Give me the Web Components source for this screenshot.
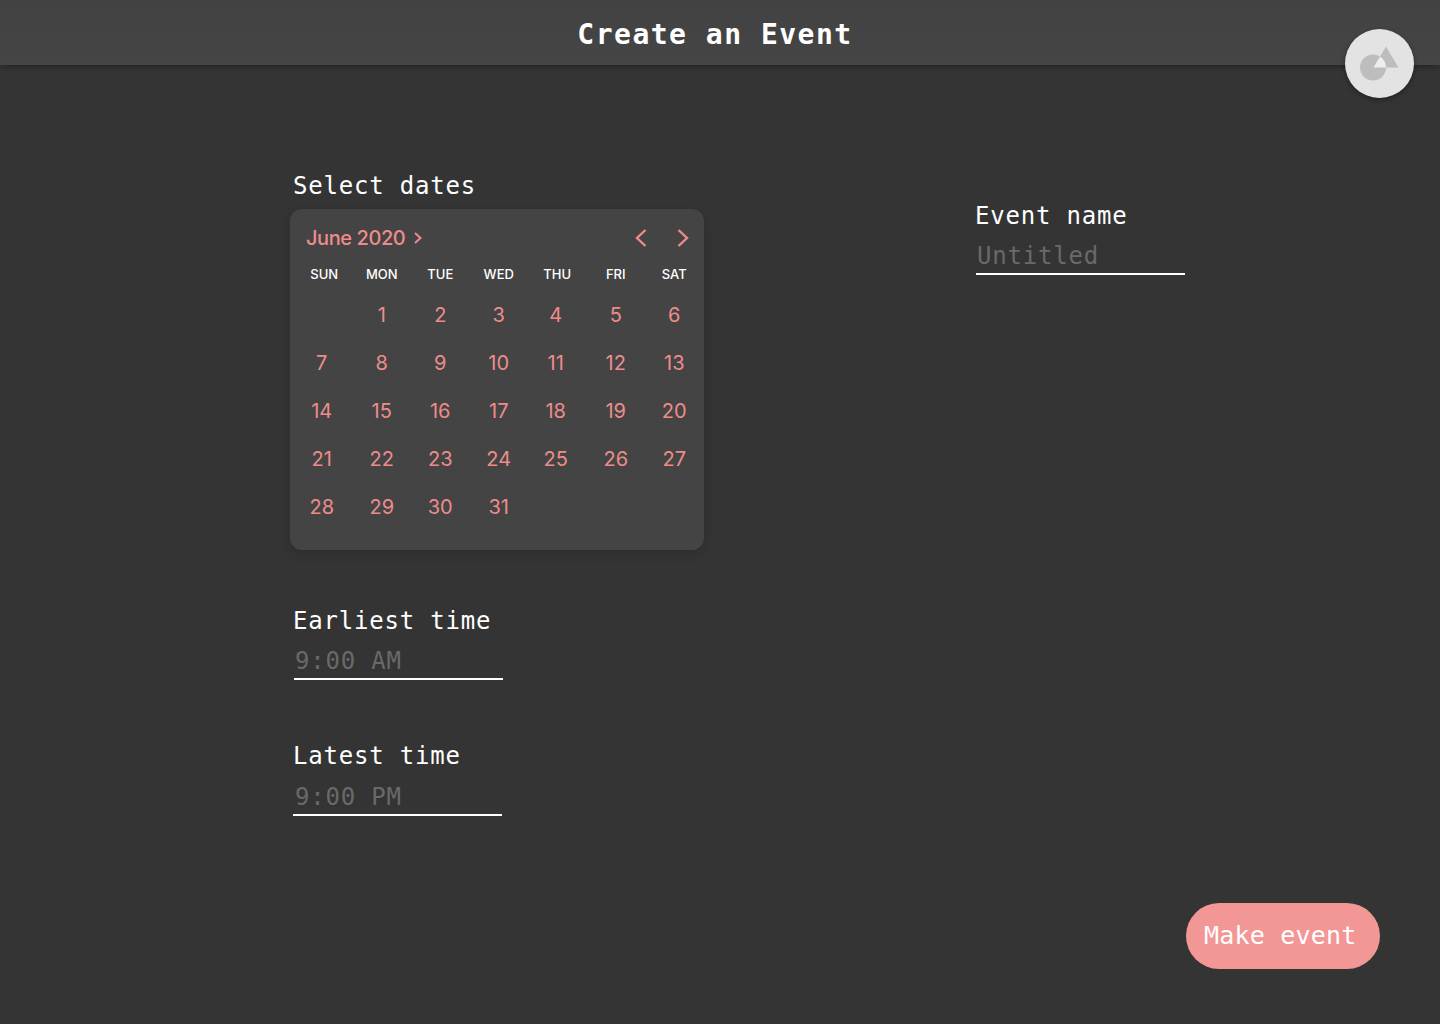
<!DOCTYPE html>
<html><head><meta charset="utf-8">
<style>
html,body{margin:0;padding:0;background:#343434;height:100%}
body{font-family:"DejaVu Sans Mono",monospace;color:#fff}
</style></head>
<body>
<app-header title="Create an Event"></app-header>
<event-page></event-page>
<template id="t-header">
<style>
:host{display:block;position:relative;height:65px;background:linear-gradient(#424242,#454545);box-shadow:0 2px 5px rgba(0,0,0,.28);z-index:2}
.bar{height:100%;display:flex;align-items:center;justify-content:center;padding-top:3px;box-sizing:border-box}
h1{margin:0 10px 0 0;font:700 28px "DejaVu Sans Mono",monospace;letter-spacing:1.5px;color:#fff}
.logo{position:absolute;left:1345px;top:29px;width:69px;height:69px;border-radius:50%;background:#e3e3e3;box-shadow:0 2px 5px rgba(0,0,0,.35);display:flex}
</style>
<div class="bar"><h1></h1></div>
<div class="logo"><svg width="69" height="69" viewBox="0 0 69 69">
<defs><clipPath id="c"><circle cx="28" cy="38.500" r="13"/></clipPath></defs>
<circle cx="28" cy="38.500" r="13" fill="#bdbdbd"/>
<path d="M41 17.500 53.500 38.500H28.500Z" fill="#bdbdbd"/>
<path d="M41 17.500 53.500 38.500H28.500Z" fill="#eeeeee" clip-path="url(#c)"/>
</svg></div>
</template>

<template id="t-field">
<style>
:host{display:block;width:209px}
label{display:block;margin-left:var(--lx,-1px);font-size:24px;line-height:30px;letter-spacing:.8px;color:#fff;white-space:nowrap}
.v{font-size:24px;line-height:30px;letter-spacing:.8px;color:#696969;padding:var(--vt,10px) 0 0 var(--vx,1px);height:32px;border-bottom:2px solid #fff;white-space:nowrap}
</style>
<label><slot name="label"></slot></label>
<div class="v"><slot></slot></div>
</template>

<template id="t-cal">
<style>
:host{display:block;width:414px;height:341px;box-sizing:border-box;background:#444;border-radius:12px;box-shadow:0 4px 12px rgba(0,0,0,.12);padding:16px 0 0 4px;font-family:Inter,sans-serif}
.head{display:flex;align-items:center;height:26px;padding-left:12px;color:#ee8c8c}
.m{font-size:20px;font-weight:500;letter-spacing:-.42px;color:#ee8c8c}
.head svg{display:block}
.sp{flex:1}
.nav{display:flex;gap:24px;align-items:center;margin-right:12px}
.grid{display:grid;grid-template-columns:repeat(7,58.500px);margin-top:13px}
.w{height:20px;display:flex;align-items:center;justify-content:center;font-size:13px;font-weight:500;color:#fff;margin-bottom:7px}
.w.s{padding-left:2px}
.d{height:48px;box-sizing:border-box;display:flex;align-items:center;justify-content:center;font-size:20px;color:#ee8c8c}
.d.n{padding-right:3px}
</style>
<div class="head"><span class="m">June 2020</span>
<svg width="10" height="14" viewBox="0 0 10 14" style="margin-left:8px"><path d="M2 2l5.500 5L2 12" fill="none" stroke="#ee8c8c" stroke-width="2"/></svg>
<span class="sp"></span>
<div class="nav">
<svg width="18" height="20" viewBox="0 0 18 20"><path d="M13.500 2 5 10l8.500 8" fill="none" stroke="#ee8c8c" stroke-width="2.400"/></svg>
<svg width="18" height="20" viewBox="0 0 18 20"><path d="M4.500 2 13 10l-8.500 8" fill="none" stroke="#ee8c8c" stroke-width="2.400"/></svg>
</div></div>
<div class="grid" id="g"></div>
</template>

<template id="t-btn">
<style>
:host{display:inline-flex;align-items:center;justify-content:flex-start;width:194px;height:66px;box-sizing:border-box;padding-left:18px;padding-bottom:2px;border-radius:33px;background:#f29696;color:#fff;font-size:25px;letter-spacing:.2px;white-space:nowrap}
</style><slot></slot>
</template>

<template id="t-page">
<style>
:host{display:block;height:959px;box-sizing:border-box;position:relative}
.cols{display:flex;padding-top:106px;padding-left:290px;height:733px;box-sizing:border-box}
.left{width:686px}
.title{font-size:24px;line-height:30px;letter-spacing:.8px;padding-left:3px;margin-bottom:8px}
.t1{margin:56px 0 0 4px}
.t2{margin:61px 0 0 3px;--vx:2px;--lx:0px;--vt:11px}
.right{padding-top:30px}
.foot{display:flex;justify-content:flex-end;padding-right:60px;padding-top:105px}
</style>
<div class="cols">
<div class="left">
<div class="title">Select dates</div>
<cal-view></cal-view>
<text-field class="t1"><span slot="label">Earliest time</span>9:00 AM</text-field>
<text-field class="t2"><span slot="label">Latest time</span>9:00 PM</text-field>
</div>
<div class="right"><text-field><span slot="label">Event name</span>Untitled</text-field></div>
</div>
<div class="foot"><make-button>Make event</make-button></div>
</template>

<script>
function mount(el,id){const r=el.attachShadow({mode:'open'});r.appendChild(document.getElementById(id).content.cloneNode(true));return r}
customElements.define('app-header',class extends HTMLElement{constructor(){super();const r=mount(this,'t-header');r.querySelector('h1').textContent=this.getAttribute('title')}});
customElements.define('text-field',class extends HTMLElement{constructor(){super();mount(this,'t-field')}});
customElements.define('make-button',class extends HTMLElement{constructor(){super();mount(this,'t-btn')}});
customElements.define('event-page',class extends HTMLElement{constructor(){super();mount(this,'t-page')}});
customElements.define('cal-view',class extends HTMLElement{constructor(){super();const r=mount(this,'t-cal');const g=r.getElementById('g');
let h='';['SUN','MON','TUE','WED','THU','FRI','SAT'].forEach((w,i)=>{h+=`<div class="w${i==0?' s':''}">${w}</div>`});
h+='<div class="d"></div>';for(let i=1;i<=31;i++){const c=i%7;h+=`<div class="d${c==0||c==4?' n':''}">${i}</div>`}g.innerHTML=h}});
</script>
</body></html>
